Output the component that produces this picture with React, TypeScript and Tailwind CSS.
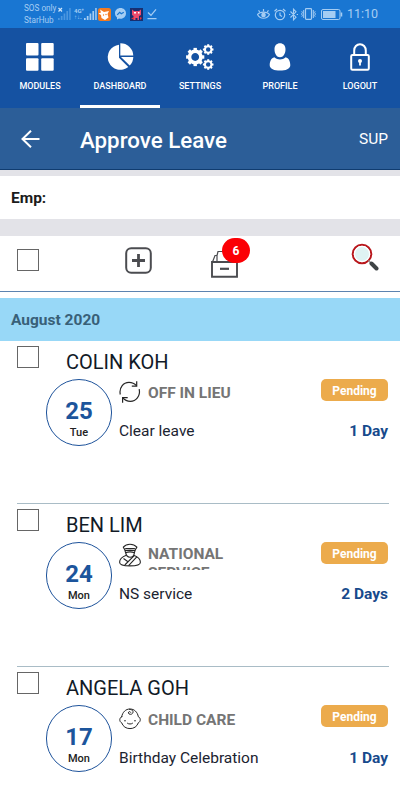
import React from 'react';

interface LeaveRequest {
  name: string;
  day: string;
  weekday: string;
  type: string;
  typeClass: string;
  reasonClass: string;
  icon: React.ReactNode;
  reason: string;
  duration: string;
}

const ModulesIcon = () => (
  <svg width="28" height="28" viewBox="0 0 28 28" fill="white">
    <rect x="0" y="0" width="12.5" height="12.5" rx="1" />
    <rect x="15.2" y="0" width="12.5" height="12.5" rx="1" />
    <rect x="0" y="15.2" width="12.5" height="12.5" rx="1" />
    <rect x="15.2" y="15.2" width="12.5" height="12.5" rx="1" />
  </svg>
);

const PieIcon = () => (
  <svg width="28" height="28" viewBox="0 0 28 28" fill="white">
    <path d="M13 1.7v13l9.3 9.3A12.6 12.6 0 1 1 13 1.7z" />
    <path d="M14.3 0.3A12.8 12.8 0 0 1 27.3 12.5H14.3z" />
    <path d="M15 14h12.3a12.6 12.6 0 0 1-3.6 8.6z" />
  </svg>
);

const Gear: React.FC<{ cx: number; cy: number; r: number; w: number }> = ({ cx, cy, r, w }) => (
  <g transform={`translate(${cx} ${cy})`} stroke="white" fill="none">
    <circle r={r} strokeWidth={w} />
    {[0, 45, 90, 135, 180, 225, 270, 315].map((a) => (
      <path key={a} d={`M0 ${-r}V${-r - w * 0.95}`} strokeWidth={w * 0.95} transform={`rotate(${a})`} />
    ))}
  </g>
);

const GearsIcon = () => (
  <svg width="28" height="28" viewBox="0 0 28 28">
    <Gear cx={9.2} cy={14} r={5.7} w={3.6} />
    <Gear cx={22.2} cy={6.5} r={3.3} w={2.1} />
    <Gear cx={22.2} cy={21.5} r={3.3} w={2.1} />
  </svg>
);

const ProfileIcon = () => (
  <svg width="22" height="28" viewBox="0 0 22 28" fill="white">
    <path d="M11 .3c3.3 0 5.5 2.3 5.5 6 0 4.600-2.300 8-5.500 8s-5.500-3.400-5.500-8c0-3.700 2.200-6 5.500-6z" />
    <path d="M5.300 14.200c1.800 1.500 3.600 2.200 5.700 2.200s3.900-.700 5.700-2.200c3 .9 4.600 4 4.600 8 0 3.600-4.600 5.400-10.300 5.400S.7 25.800.7 22.200c0-4 1.600-7.100 4.600-8z" />
  </svg>
);

const LockIcon = () => (
  <svg width="20" height="28" viewBox="0 0 20 28" fill="none" stroke="white" strokeWidth="2">
    <rect x="1.200" y="12" width="17.600" height="14.800" rx="1.200" />
    <path d="M4.200 12V7.500a5.800 6.300 0 0 1 11.600 0V12" />
    <circle cx="10" cy="18" r="2" fill="white" stroke="none" />
    <path d="M10 18v4.500" strokeWidth="1.800" />
  </svg>
);

const SwapIcon = () => (
  <svg width="22" height="24" viewBox="0 0 22 24" fill="none" stroke="#262626" strokeWidth="1.200">
    <path d="M1.300 14.500C-.2 7.500 4.500 2.400 10 2.400c2.900 0 5.500 1.100 7.600 3.400" />
    <path d="M17.700 1.300v4.800h-4.900" />
    <path d="M20.200 9.200c1.400 7-3.300 12.200-8.800 12.200-3 0-5.800-1.300-7.800-3.700" />
    <path d="M3.600 22.800v-5.200h5.100" />
  </svg>
);

const OfficerIcon = () => (
  <svg width="22" height="24" viewBox="0 0 22 24" fill="none" stroke="#262626" strokeWidth="1.100" strokeLinejoin="round">
    <path d="M4.300 4.200C6 2.200 8.500 1.200 11 1.200s5 .9 6.900 2.900l-2 3.300H6.200z" />
    <path d="M6.200 5.500h9.700M6 7.800c2-.8 8-.8 10 0l-.6 1.900c-2.700-1-6-1-8.800 0z" />
    <path d="M6.700 9.700c.4 2.800 1.900 4.500 4.300 4.500s4.100-1.700 4.400-4.500" />
    <path d="M7.300 12.300C3.300 13.800.6 16 .6 19.200c0 2.400 4 3.700 10.400 3.700s10.400-1.300 10.400-3.700c0-3.100-2.600-5.300-6.700-6.900" />
    <path d="M15.200 12.600 5.800 22M17.800 13.900 9.600 22.700M4.500 15.500l4.500 3.300" />
  </svg>
);

const BabyIcon = () => (
  <svg width="22" height="24" viewBox="0 0 22 24" fill="none" stroke="#262626" strokeWidth="1" strokeLinecap="round">
    <path d="M2.700 10.700C3.500 6 6.800 3 11 3s7.500 3 8.300 7.700c2.600 1 2.600 5.100 0 6.100-1.300 3.900-4.500 5.800-8.300 5.800s-7-1.900-8.300-5.800c-2.600-1-2.600-5.100 0-6.100z" />
    <path d="M10.500 3.300c3.100.3 4.100 2 3.300 3.700-.9 1.900-4.200 1.700-4.400-.1-.1-1.500 1.900-1.800 2.300-.6" />
    <path d="M8.500 17.300c1.400 1 3.600 1 5 0" />
    <path d="M6 14.700v.1M16 14.700v.1" strokeWidth="1.600" />
  </svg>
);

const requests: LeaveRequest[] = [
  { name: 'COLIN KOH', day: '25', weekday: 'Tue', type: 'OFF IN LIEU', typeClass: 'pt-[4px]', reasonClass: 'mt-[12px]', icon: <SwapIcon />, reason: 'Clear leave', duration: '1 Day' },
  { name: 'BEN LIM', day: '24', weekday: 'Mon', type: 'NATIONAL SERVICE', typeClass: 'pt-[2px]', reasonClass: 'mt-[12px]', icon: <OfficerIcon />, reason: 'NS service', duration: '2 Days' },
  { name: 'ANGELA GOH', day: '17', weekday: 'Mon', type: 'CHILD CARE', typeClass: 'pt-[5px]', reasonClass: 'mt-[13px]', icon: <BabyIcon />, reason: 'Birthday Celebration', duration: '1 Day' },
];

const tabs = [
  { label: 'MODULES', icon: <ModulesIcon /> },
  { label: 'DASHBOARD', icon: <PieIcon />, active: true },
  { label: 'SETTINGS', icon: <GearsIcon /> },
  { label: 'PROFILE', icon: <ProfileIcon /> },
  { label: 'LOGOUT', icon: <LockIcon /> },
];

const Signal: React.FC<{ off?: boolean }> = ({ off }) => (
  <svg width="13" height="14" viewBox="0 0 13 14" fill={off ? '#4c97e0' : '#a5cdf3'}>
    <path d="M0 11h1.700v2H0zM2.800 9h1.700v4H2.800zM5.600 6.500h1.700V13H5.600zM8.400 4h1.700v9H8.400zM11.200 1h1.500v12h-1.500z" />
  </svg>
);

const StatusBar = () => (
  <div className="h-7 bg-[#1976d2] flex items-center text-[#a5cdf3]">
    <div className="ml-[24px] w-[33px] text-[8.2px] leading-[12px] whitespace-nowrap">
      <div>SOS only</div>
      <div>StarHub</div>
    </div>
    <div className="flex items-center">
      <svg width="6" height="14" viewBox="0 0 6 14" stroke="#cfe6fb" strokeWidth="1.200">
        <path d="m1.500 1 3.500 3.500m0-3.500L1.500 4.500" />
      </svg>
      <div className="-ml-[5px]"><Signal off /></div>
    </div>
    <div className="ml-[3px] flex items-center">
      <div className="w-[10px] text-[6px] leading-[6px] font-bold">
        <div>4G⁺</div>
        <div>↑↓.</div>
      </div>
      <Signal />
    </div>
    <svg className="ml-[1px]" width="13" height="13" viewBox="0 0 13 13">
      <rect width="13" height="13" rx="2.500" fill="#f47b20" />
      <path d="M2 1.500 6 4l5-1-1.500 3 1 3.500L7 12 3.500 10 3 7 .5 5.500l2.500-1z" fill="white" />
      <circle cx="5.500" cy="7" r=".7" fill="#f47b20" />
      <circle cx="8" cy="6.500" r=".7" fill="#f47b20" />
    </svg>
    <svg className="ml-[4px]" width="11" height="12" viewBox="0 0 11 12">
      <path d="M5.500 0C2.400 0 0 2.200 0 5.200 0 7 .8 8.400 2 9.400v2.200l2-1.100c3.900 1 7-1.700 7-5.300C11 2.200 8.600 0 5.500 0z" fill="#a5cdf3" />
      <path d="M2.200 6.900 4.700 4.300l1.600 1.400 2.500-1.500" stroke="#1976d2" strokeWidth="1.300" fill="none" />
    </svg>
    <svg className="ml-[4px]" width="13" height="13" viewBox="0 0 13 13">
      <rect width="13" height="13" fill="#172f70" />
      <path d="M2 1.500 4 3h5l2-1.500V7L9 8v4H7.500v-2h-2v2H3.500V8L2 7z" fill="#ef4b6c" />
      <path d="M4 4h2v1.500H4zM8 4h1.500v1.500H8z" fill="#fff" />
      <path d="M1 10.500 4 9v2.500zM10 9l2 1-2 2z" fill="#ed3338" />
    </svg>
    <svg className="ml-[4px]" width="10" height="12" viewBox="0 0 10 12" fill="none" stroke="#a5cdf3" strokeWidth="1.300">
      <path d="M1 4.500 4 7.300l5-6M.5 10.700h9" />
    </svg>

    <div className="ml-auto mr-[22px] flex items-center">
      <svg width="13" height="12" viewBox="0 0 13 12" fill="none" stroke="#a5cdf3" strokeWidth="1.200">
        <path d="M.5 6.500C3 3.300 10 3.300 12.500 6.500 10 11.500 3 11.500.5 6.500zM2.800 4 1.500 2.300M6.500 3.300V1M10.200 4l1.300-1.700" />
        <circle cx="6.500" cy="7" r="1.700" fill="#a5cdf3" />
      </svg>
      <svg className="ml-[4px]" width="12" height="13" viewBox="0 0 12 13" fill="none" stroke="#a5cdf3" strokeWidth="1.200">
        <circle cx="6" cy="7" r="4.700" />
        <path d="M.5 3.200 3 1M11.500 3.200 9 1M6 4.500v2.700l2 1.300" />
      </svg>
      <svg className="ml-[3px]" width="9" height="13" viewBox="0 0 9 13" fill="none" stroke="#a5cdf3" strokeWidth="1.100">
        <path d="M1.500 3.500 7 9.200l-2.500 2.600V1.200L7 3.800 1.500 9.500M0 6.500h1.300M7.700 6.500H9" />
      </svg>
      <svg className="ml-[3px]" width="15" height="12" viewBox="0 0 15 12" fill="none" stroke="#a5cdf3" strokeWidth="1.200">
        <rect x="4.500" y=".7" width="6" height="10.600" rx=".8" />
        <path d="M2.700 2v8M.8 3.300 1.400 4.700.5 6l.9 1.300-.6 1.400M12.300 2v8M14.200 3.300l-.6 1.400.9 1.300-.9 1.300.6 1.400" strokeWidth="1" />
      </svg>
      <svg className="ml-[5px]" width="22" height="11" viewBox="0 0 22 11">
        <rect x=".5" y=".5" width="18.500" height="10" rx="1.500" fill="none" stroke="#a5cdf3" />
        <rect x="2" y="2" width="12.500" height="7" fill="#a5cdf3" />
        <path d="M20.500 3.500v4" stroke="#a5cdf3" strokeWidth="1.500" />
      </svg>
      <span className="ml-[4px] text-[12.5px] leading-[14px] w-[31px] whitespace-nowrap">11:10</span>
    </div>
  </div>
);

const Checkbox = () => <div className="w-[22px] h-[22px] shrink-0 border border-[#666] bg-white" />;

const LeaveRow: React.FC<{ item: LeaveRequest }> = ({ item }) => (
  <div className="ml-[17px] mr-[11px] h-[163px] border-b border-[#a9bcc6]">
    <div className="flex h-[38px] pt-[5px]">
      <Checkbox />
      <h3 className="ml-[27px] mt-[4px] text-[20px] leading-[24px] text-[#111a27]">{item.name}</h3>
    </div>
    <div className="flex pl-[29px]">
      <div className="w-[66px] h-[67px] rounded-full border border-[#1e539b] flex flex-col items-center pt-[17px]">
        <span className="text-[24px] leading-[28px] font-bold text-[#1c559c]">{item.day}</span>
        <span className="text-[11px] leading-[16px] font-medium text-[#222]">{item.weekday}</span>
      </div>
      <div className="ml-[7px] flex-1">
        <div className="flex justify-between">
          <div className="flex h-[29px] overflow-hidden">
            <div className="mt-[1px]">{item.icon}</div>
            <p className={`ml-[7px] mt-[1px] w-[100px] h-[27px] overflow-hidden text-[15.5px] leading-[19px] font-bold text-[#757575] ${item.typeClass}`}>
              {item.type}
            </p>
          </div>
          <span className="mr-px w-[67px] h-[22px] rounded-[5px] bg-[#ecab4c] text-center text-[12px] leading-[24px] font-bold text-white">Pending</span>
        </div>
        <div className={`mr-px flex justify-between text-[15.5px] leading-[22px] ${item.reasonClass}`}>
          <span className="text-[#1b2330]">{item.reason}</span>
          <span className="font-bold text-[#174a8c]">{item.duration}</span>
        </div>
      </div>
    </div>
  </div>
);

const App: React.FC = () => {
  return (
    <div className="w-full h-[800px] overflow-hidden bg-white font-['Roboto',sans-serif]">
      <StatusBar />

      <nav className="h-20 bg-[#1552a2] grid grid-cols-5">
        {tabs.map((tab) => (
          <div key={tab.label} className={`flex flex-col items-center pt-[15px] border-b-[3px] ${tab.active ? 'border-white' : 'border-transparent'}`}>
            <div className="h-7">{tab.icon}</div>
            <span className="mt-[8px] text-[9px] leading-[14px] font-medium text-white">{tab.label}</span>
          </div>
        ))}
      </nav>

      <header className="h-[62px] bg-[#2c5e98] border-b border-[#103c70] flex items-center text-white">
        <svg className="ml-[21px]" width="19" height="18" viewBox="0 0 19 18" fill="none" stroke="white" strokeWidth="2">
          <path d="M18.500 9H1.500M10 .8 1.500 9l8.500 8.200" />
        </svg>
        <h1 className="ml-[40px] mt-[3px] text-[22.3px] leading-[30px] font-medium">Approve Leave</h1>
        <span className="ml-auto mr-[12px] mt-[2px] text-[15.5px]">SUP</span>
      </header>

      <div className="h-[6px] bg-[#e3e3e8]" />
      <div className="h-[43px] px-[11px] pt-[3px] flex items-center text-[15.5px] font-bold text-[#1b1b1b]">Emp:</div>
      <div className="h-[17px] bg-[#e3e3e8]" />

      <div className="h-[56px] border-b border-[#5c83b0] flex items-start">
        <div className="ml-[17px] mt-[13px]"><Checkbox /></div>
        <svg className="ml-[86px] mt-[11px]" width="27" height="27" viewBox="0 0 27 27" fill="none" stroke="#4b4c50" strokeWidth="2">
          <rect x="1.200" y="1.200" width="24.600" height="24.600" rx="5" />
          <path d="M7 13.500h13M13.500 7v13" strokeWidth="2.800" />
        </svg>
        <div className="relative ml-[59px] mt-[14px]">
          <svg width="28" height="28" viewBox="0 0 28 28" fill="none" stroke="#4b4c50" strokeWidth="1.900">
            <path d="M1 12h25v14.800H1z" />
            <path d="M1.500 12 4 5.500h2V12M6 5.500 7 1.500h11V12" strokeWidth="1.200" />
            <path d="M9 18.800h9" strokeWidth="2.200" />
          </svg>
          <span className="absolute -top-[12px] left-[11px] w-[28px] h-[25px] rounded-full bg-[#fb0005] text-center text-[12px] leading-[27px] font-bold text-white">6</span>
        </div>
        <svg className="ml-auto mr-[21px] mt-[7px]" width="28" height="29" viewBox="0 0 28 29" fill="none">
          <circle cx="11" cy="11" r="9.300" fill="#dff3f3" stroke="#b9171c" strokeWidth="2" />
          <circle cx="11" cy="11" r="7.600" stroke="white" strokeWidth="1.200" />
          <path d="m17.500 17.500 2.500 2.500" stroke="#999" strokeWidth="1.500" />
          <path d="m20.500 20.500 5 5" stroke="#3f4446" strokeWidth="4" strokeLinecap="round" />
        </svg>
      </div>

      <h2 className="mt-[6px] h-[43px] px-[11px] bg-[#98d8f7] text-[15.5px] leading-[45px] font-bold text-[#386078]">August 2020</h2>

      {requests.map((item) => (
        <LeaveRow key={item.name} item={item} />
      ))}
    </div>
  );
};

export default App;
